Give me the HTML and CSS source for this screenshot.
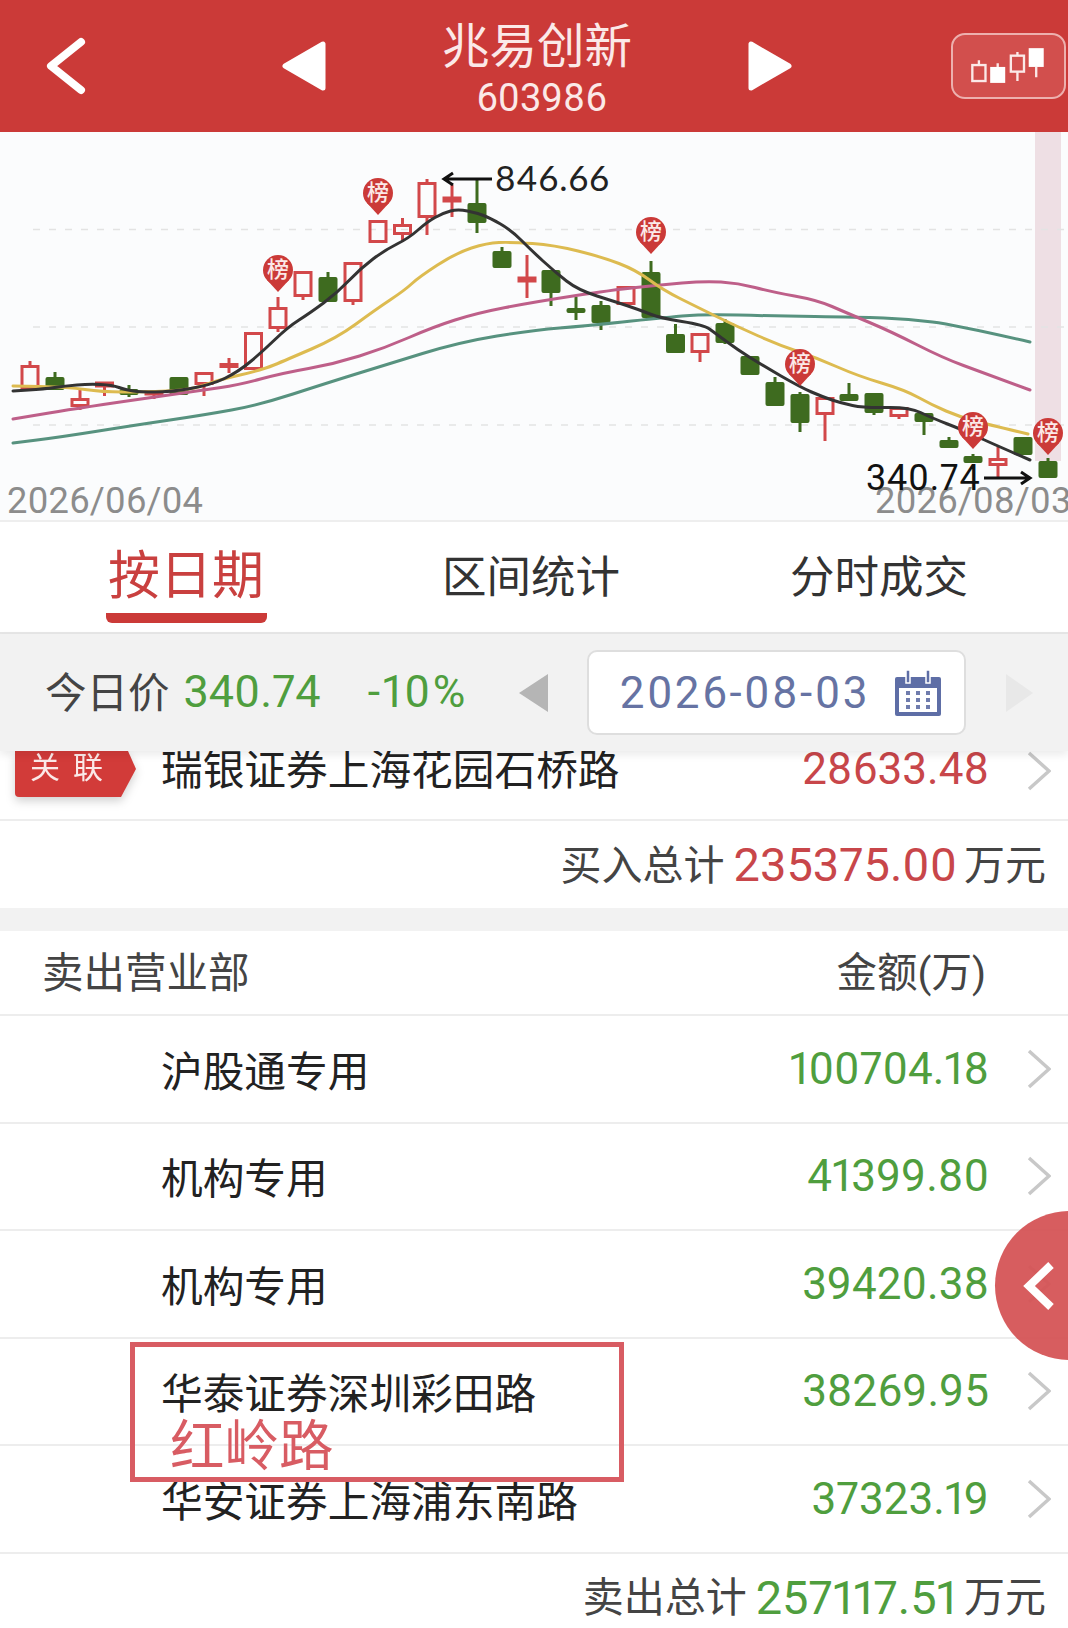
FILE: index.html

```html
<!DOCTYPE html>
<html lang="zh-CN">
<head>
  <meta charset="UTF-8">
  <title>兆易创新 603986</title>
  <meta name="viewport" content="width=device-width, initial-scale=1.0">
  <link rel="stylesheet" href="styles.css">
</head>
<body>

<header class="topbar">
  <svg class="top-icon back" viewBox="0 0 48 64"><path d="M38 8 L8 32 L38 56"/></svg>
  <svg class="top-icon prev" viewBox="0 0 44 50"><path d="M41 3 V47 L3 25 Z"/></svg>
  <div class="title">
    <div class="name">兆易创新</div>
    <div class="code">603986</div>
  </div>
  <svg class="top-icon next" viewBox="0 0 44 50"><path d="M3 3 V47 L41 25 Z"/></svg>
  <div class="kline-btn">
    <svg viewBox="0 0 115 66">
      <g class="k-hollow">
        <rect x="19" y="32" width="14" height="17"/>
        <rect x="60" y="22" width="14" height="17"/>
        <path d="M26 27 V32 M67 18 V22 M67 39 V49"/>
      </g>
      <g class="k-solid">
        <rect x="38" y="34" width="16" height="17"/>
        <rect x="79" y="14" width="16" height="20"/>
        <path d="M46 30 V34 M87 34 V45"/>
      </g>
    </svg>
  </div>
</header>

<section class="chart">
  <svg viewBox="0 132 1068 388">
    <rect class="band" x="1035" y="132" width="26" height="329"/>
    <path class="grid" d="M33 229.5 H1068 M33 327 H1068 M33 425 H1068"/>

    <g class="red-k">
      <path d="M30 361 V365 M80 388 V398 M80 407 V410 M104.5 387 V396 M154 395 V399 M204 385 V396 M229 358 V363 M229 368 V373 M278 297 V307 M278 329 V332 M303 297 V300 M353 302 V305 M402.5 218 V224 M402.5 235 V242 M427 179 V182 M427 218 V235 M452 185 V217 M527 255 V298 M700 353 V362 M825 415 V441 M899 417 V419 M998 447 V458 M998 466 V477"/>
      <rect x="22" y="366.5" width="16" height="22"/>
      <rect x="72" y="399.5" width="16" height="6"/>
      <rect x="96.5" y="383" width="16" height="3"/>
      <rect x="146" y="392" width="16" height="2"/>
      <rect x="196" y="373.5" width="16" height="10"/>
      <rect x="221" y="364.5" width="16" height="2"/>
      <rect x="245.5" y="333.5" width="16" height="35"/>
      <rect x="270" y="308.5" width="16" height="19"/>
      <rect x="295" y="272.5" width="16" height="23"/>
      <rect x="345" y="263.5" width="16" height="37"/>
      <rect x="370" y="221.5" width="16" height="20"/>
      <rect x="394.5" y="225.5" width="16" height="8"/>
      <rect x="419" y="183.5" width="16" height="33"/>
      <rect x="444" y="198" width="16" height="3"/>
      <rect x="519" y="278" width="16" height="3"/>
      <rect x="618" y="287.5" width="16" height="16"/>
      <rect x="692" y="334.5" width="16" height="17"/>
      <rect x="817" y="398.5" width="16" height="15"/>
      <rect x="891" y="408.5" width="16" height="7"/>
      <rect x="990" y="459.5" width="16" height="5"/>
    </g>

    <g class="green-k">
      <path d="M55 372 V377 M129 385 V397 M328 272 V277 M477 180 V233 M502 247 V251 M551 293 V306 M576 297 V320 M601 301 V330 M651 261 V272 M675.5 324 V334 M725 319 V344 M775 377 V382 M800 392 V432 M849 383 V394 M874 413 V415 M924 422 V435 M949 437 V440 M973 454 V456 M1048 458 V461"/>
      <rect x="45.500" y="377" width="19" height="13" rx="2"/>
      <rect x="119.500" y="389" width="19" height="6" rx="2"/>
      <rect x="169.500" y="377" width="19" height="18" rx="2"/>
      <rect x="318.500" y="277" width="19" height="25" rx="2"/>
      <rect x="467.500" y="203" width="19" height="20" rx="2"/>
      <rect x="492.500" y="251" width="19" height="17" rx="2"/>
      <rect x="541.500" y="270" width="19" height="23" rx="2"/>
      <rect x="566.500" y="308" width="19" height="5" rx="2"/>
      <rect x="591.500" y="305" width="19" height="18" rx="2"/>
      <rect x="641.500" y="272" width="19" height="46" rx="2"/>
      <rect x="666" y="334" width="19" height="19" rx="2"/>
      <rect x="715.500" y="323" width="19" height="20" rx="2"/>
      <rect x="740.500" y="356" width="19" height="19" rx="2"/>
      <rect x="765.500" y="382" width="19" height="24" rx="2"/>
      <rect x="790.500" y="394" width="19" height="29" rx="2"/>
      <rect x="839.500" y="394" width="19" height="7" rx="2"/>
      <rect x="864.500" y="393" width="19" height="20" rx="2"/>
      <rect x="914.500" y="413" width="19" height="9" rx="2"/>
      <rect x="939.500" y="440" width="19" height="8" rx="2"/>
      <rect x="963.500" y="456" width="19" height="7" rx="2"/>
      <rect x="1013.500" y="437" width="19" height="18" rx="2"/>
      <rect x="1038.500" y="461" width="19" height="17" rx="2"/>
    </g>

    <path class="ma teal" d="M13 443 L37 440 Q61 437 98.5 431 Q136 425 170 420 Q204 415 231.5 410 Q259 405 293 394 Q327 383 356 374 Q385 365 422.5 353.5 Q460 342 497 336 Q534 330 559.5 328 Q585 326 622.5 322 Q660 318 682 316 Q704 314 738 315 Q772 316 815 316.5 Q858 317 883.5 318 Q909 319 932.5 322 Q956 325 1030 342"/>
    <path class="ma pink" d="M13 419 L49 413 Q85 407 144.5 398.5 Q204 390 221 387.5 Q238 385 260.5 379 Q283 373 308.5 368.5 Q334 364 359.5 356 Q385 348 409 337.5 Q433 327 455 320 Q477 313 505.5 307.5 Q534 302 573 296 Q612 290 636 287.5 Q660 285 682 283 Q704 281 721 282 Q738 283 755 287.5 Q772 292 794.5 296 Q817 300 832 306.5 Q847 313 869.5 322.5 Q892 332 917.5 345 Q943 358 963.5 365.5 Q984 373 1030 390"/>
    <path class="ma yellow" d="M13 386 L40 386.5 Q68 387 85 389.5 Q102 392 122.5 392 Q143 392 167 391 Q191 390 204.5 385 Q218 380 240 375 Q262 370 274 365 Q286 360 311.5 349 Q337 338 356 324 Q375 310 390 300 Q405 290 412 283.5 Q419 277 437.5 265 Q456 253 471.5 248 Q487 243 499 242.5 Q511 242 532.5 243.5 Q554 245 578 251 Q602 257 619 263.5 Q636 270 649.5 280 Q663 290 680 298.5 Q697 307 717.5 317 Q738 327 758.5 336 Q779 345 798 351.5 Q817 358 837.5 367 Q858 376 881.5 383 Q905 390 918.5 397.5 Q932 405 946 411 Q960 417 975 421 Q990 425 1028 434"/>
    <path class="ma dark" d="M13 391 L28.5 390 Q44 389 54.5 387.5 Q65 386 77 385 Q89 384 100.5 384.5 Q112 385 119 387.5 Q126 390 133 391 Q140 392 155 392 Q170 392 190.5 388.5 Q211 385 224.5 378.5 Q238 372 250 362 Q262 352 275 339.5 Q288 327 299 320 Q310 313 323.5 303 Q337 293 349 280.5 Q361 268 373 259 Q385 250 397 244 Q409 238 418 230 Q427 222 435 217.5 Q443 213 450.5 211 Q458 209 467.5 211 Q477 213 483.5 215.5 Q490 218 500.5 224 Q511 230 521 240 Q531 250 543 261 Q555 272 566.5 281 Q578 290 597 296 Q616 302 628 306 Q640 310 650 314 Q660 318 682 321.5 Q704 325 709.5 329 Q715 333 726.5 341.5 Q738 350 750 357.5 Q762 365 781 376 Q800 387 811.5 392 Q823 397 832 400 Q841 403 852.5 405.5 Q864 408 886.5 407.5 Q909 407 920.5 412.5 Q932 418 947.5 424 Q963 430 973.5 435 Q984 440 1030 460"/>

    <g class="pin" transform="translate(378 193)"><circle r="15"/><path d="M-11 10 L0 22 L11 10 Z"/><text y="7">榜</text></g>
    <g class="pin" transform="translate(278 270)"><circle r="15"/><path d="M-11 10 L0 22 L11 10 Z"/><text y="7">榜</text></g>
    <g class="pin" transform="translate(651 232)"><circle r="15"/><path d="M-11 10 L0 22 L11 10 Z"/><text y="7">榜</text></g>
    <g class="pin" transform="translate(800 364)"><circle r="15"/><path d="M-11 10 L0 22 L11 10 Z"/><text y="7">榜</text></g>
    <g class="pin" transform="translate(973 427)"><circle r="15"/><path d="M-11 10 L0 22 L11 10 Z"/><text y="7">榜</text></g>
    <g class="pin" transform="translate(1048 433)"><circle r="15"/><path d="M-11 10 L0 22 L11 10 Z"/><text y="7">榜</text></g>

    <path class="arrow" d="M492 179 H445 M453 173 L444 179 L453 185"/>
    <text class="peak" x="495" y="191">846.66</text>
    <text class="date-label" x="7" y="513">2026/06/04</text>
    <text class="date-label" x="875" y="513">2026/08/03</text>
    <text class="low" x="866" y="490">340.74</text>
    <path class="arrow" d="M984 478 H1029 M1021 472 L1030 478 L1021 484"/>
  </svg>
</section>

<nav class="tabs">
  <div class="tab active"><span>按日期</span></div>
  <div class="tab">区间统计</div>
  <div class="tab">分时成交</div>
</nav>

<div class="price-bar">
  <span class="today">今日价</span>
  <span class="fall price">340.74</span>
  <span class="fall pct">-10%</span>
  <svg class="tri tri-prev" viewBox="0 0 31 40"><path d="M30 1 V39 L1 20 Z"/></svg>
  <div class="date-box">
    <span class="date-text">2026-08-03</span>
    <svg class="calendar" viewBox="0 0 48 46">
      <path class="cal-frame" d="M3 7 H45 a2 2 0 0 1 2 2 V44 a2 2 0 0 1 -2 2 H3 a2 2 0 0 1 -2 -2 V9 a2 2 0 0 1 2 -2 Z"/>
      <rect class="cal-page" x="5" y="18" width="38" height="24"/>
      <rect class="cal-peg" x="12" y="0" width="4" height="13"/>
      <rect class="cal-peg" x="32" y="0" width="4" height="13"/>
      <g class="cal-dots">
        <rect x="12" y="21" width="4" height="4"/><rect x="22" y="21" width="4" height="4"/><rect x="32" y="21" width="4" height="4"/>
        <rect x="12" y="28" width="4" height="4"/><rect x="22" y="28" width="4" height="4"/><rect x="32" y="28" width="4" height="4"/>
        <rect x="12" y="35" width="4" height="4"/><rect x="22" y="35" width="4" height="4"/><rect x="32" y="35" width="4" height="4"/>
      </g>
    </svg>
  </div>
  <svg class="tri tri-next" viewBox="0 0 29 40"><path d="M1 1 V39 L28 20 Z"/></svg>
</div>

<main class="list">
  <div class="row row-cut">
    <div class="tag-shadow"><div class="tag">关联</div></div>
    <div class="dept">瑞银证券上海花园石桥路</div>
    <div class="amount rise">28633.48</div>
    <svg class="chevron" viewBox="0 0 24 40"><path d="M2 2 L22 20 L2 38"/></svg>
  </div>
  <div class="total">买入总计<b class="rise">235375.00</b>万元</div>

  <div class="gap"></div>

  <div class="list-head">
    <span>卖出营业部</span>
    <span class="head-amount">金额(万)</span>
  </div>
  <div class="row">
    <div class="dept">沪股通专用</div>
    <div class="amount fall">100704.18</div>
    <svg class="chevron" viewBox="0 0 24 40"><path d="M2 2 L22 20 L2 38"/></svg>
  </div>
  <div class="row">
    <div class="dept">机构专用</div>
    <div class="amount fall">41399.80</div>
    <svg class="chevron" viewBox="0 0 24 40"><path d="M2 2 L22 20 L2 38"/></svg>
  </div>
  <div class="row">
    <div class="dept">机构专用</div>
    <div class="amount fall">39420.38</div>
    <svg class="chevron" viewBox="0 0 24 40"><path d="M2 2 L22 20 L2 38"/></svg>
  </div>
  <div class="row">
    <div class="dept">华泰证券深圳彩田路</div>
    <div class="amount fall">38269.95</div>
    <svg class="chevron" viewBox="0 0 24 40"><path d="M2 2 L22 20 L2 38"/></svg>
  </div>
  <div class="row">
    <div class="dept">华安证券上海浦东南路</div>
    <div class="amount fall">37323.19</div>
    <svg class="chevron" viewBox="0 0 24 40"><path d="M2 2 L22 20 L2 38"/></svg>
  </div>
  <div class="total total-sell">卖出总计<b class="fall">257117.51</b>万元</div>
</main>

<div class="float-btn">
  <svg viewBox="0 0 32 50"><path d="M28 4 L6 25 L28 46"/></svg>
</div>

<div class="note">
  <span>红岭路</span>
</div>

</body>
</html>
```

FILE: styles.css

```css
html, body {
  margin: 0;
  height: 1628px;
  overflow: hidden;
}
body {
  position: relative;
  background-color: #fff;
  color: #222;
  font-family: Roboto, "Noto Sans CJK SC", sans-serif;
  font-variant-numeric: proportional-nums;
}

/* top bar */
.topbar {
  height: 132px;
  background-color: #CB3A38;
  display: flex;
  align-items: center;
  box-sizing: border-box;
}
.top-icon {
  flex: none;
}
.back {
  width: 48px;
  height: 64px;
  margin-left: 43px;
  fill: none;
  stroke: #fff;
  stroke-width: 8;
  stroke-linecap: round;
  stroke-linejoin: round;
}
.prev, .next {
  width: 44px;
  height: 50px;
  fill: #fff;
  stroke: #fff;
  stroke-width: 5;
  stroke-linejoin: round;
}
.prev {
  margin-left: 191px;
}
.title {
  width: 422px;
  align-self: flex-start;
  padding-top: 19px;
  text-align: center;
  color: #FBE9E8;
}
.name {
  font-size: 47.500px;
  line-height: 56px;
}
.code {
  font-size: 38px;
  line-height: 44px;
  margin-top: 1px;
  padding-left: 9px;
}
.kline-btn {
  width: 115px;
  height: 66px;
  margin-left: 159px;
  box-sizing: border-box;
  border: 2px solid #EDB0AE;
  border-radius: 14px;
  background-color: #D24F4D;
  flex: none;
}
.kline-btn svg {
  display: block;
  width: 111px;
  height: 62px;
}
.k-hollow rect {
  fill: none;
  stroke: #FBE9E8;
  stroke-width: 2.5;
}
.k-hollow path, .k-solid path {
  stroke: #FBE9E8;
  stroke-width: 2.5;
}
.k-solid rect {
  fill: #fff;
}

/* chart */
.chart {
  height: 388px;
  background-color: #FBFCFD;
  overflow: hidden;
}
.chart svg {
  display: block;
  width: 1068px;
  height: 388px;
}
.band {
  fill: #EEDFE4;
}
.grid {
  stroke: #E3E3E3;
  stroke-width: 1.5;
  stroke-dasharray: 7 9;
  fill: none;
}
.red-k path {
  stroke: #D2484A;
  stroke-width: 3;
}
.red-k rect {
  fill: none;
  stroke: #D2484A;
  stroke-width: 3;
}
.green-k path {
  stroke: #3E6B1F;
  stroke-width: 3;
}
.green-k rect {
  fill: #3E6B1F;
}
.ma {
  fill: none;
  stroke-width: 3;
  stroke-linejoin: round;
  stroke-linecap: round;
}
.teal {
  stroke: #57927F;
}
.pink {
  stroke: #BE5F89;
}
.yellow {
  stroke: #DDBB50;
}
.dark {
  stroke: #333;
}
.pin circle, .pin path {
  fill: #CB3A38;
}
.pin text {
  fill: #FBE9E8;
  font-size: 22px;
  font-weight: 500;
  text-anchor: middle;
}
.arrow {
  fill: none;
  stroke: #111;
  stroke-width: 3;
}
.peak {
  font-family: Lato, sans-serif;
  font-size: 35px;
  letter-spacing: 1px;
  fill: #222;
}
.low {
  font-size: 36px;
  letter-spacing: 0.8px;
  fill: #111;
}
.date-label {
  font-size: 36.300px;
  fill: #8C8C8C;
}

/* tabs */
.tabs {
  display: grid;
  grid-template-columns: 372px 318px 1fr;
  height: 114px;
  box-sizing: border-box;
  border-top: 2px solid #EEE;
  border-bottom: 2px solid #E6E6E6;
  background-color: #fff;
  font-size: 44.500px;
  color: #333;
  line-height: 100px;
}
.tab {
  display: flex;
  justify-content: center;
  align-items: center;
  padding-top: 2px;
}
.tab.active {
  color: #C9403F;
  font-size: 52px;
  padding-top: 0;
  align-items: flex-start;
}
.tab.active span {
  box-sizing: border-box;
  height: 101px;
  padding-top: 24px;
  line-height: 62px;
  border-bottom: 10px solid #CB3A38;
  border-radius: 6px;
  width: 161px;
  text-align: center;
}

/* price bar */
.price-bar {
  position: relative;
  z-index: 2;
  height: 117px;
  box-sizing: border-box;
  display: flex;
  align-items: center;
  padding-left: 45px;
  background-color: #F2F2F2;
  box-shadow: 0 4px 8px rgba(0,0,0,0.08);
}
.today {
  font-size: 41.500px;
  color: #444;
  padding-bottom: 6px;
}
.fall {
  color: #4F9E3E;
}
.rise {
  color: #C8464A;
}
.price {
  font-size: 45px;
  margin-left: 14px;
  padding-bottom: 2px;
}
.pct {
  font-size: 44.500px;
  letter-spacing: 2.500px;
  margin-left: 47px;
  padding-bottom: 2px;
}
.tri {
  flex: none;
}
.tri-prev {
  width: 33px;
  height: 40px;
  margin-left: 49px;
  fill: #B5B5B5;
}
.tri-next {
  width: 29px;
  height: 40px;
  margin-left: 39px;
  fill: #E8E8E8;
}
.date-box {
  width: 379px;
  height: 85px;
  margin-left: 37px;
  box-sizing: border-box;
  display: flex;
  align-items: center;
  padding-left: 31px;
  background-color: #fff;
  border: 2px solid #DEDEDE;
  border-radius: 10px;
  flex: none;
}
.date-text {
  font-size: 44px;
  letter-spacing: 2.400px;
  color: #6673A3;
}
.calendar {
  width: 48px;
  height: 46px;
  margin-left: 24px;
  flex: none;
}
.cal-frame {
  fill: #5E6EA6;
}
.cal-page {
  fill: #fff;
}
.cal-peg {
  fill: #5E6EA6;
  stroke: #fff;
  stroke-width: 1.5;
}
.cal-dots {
  fill: #6F7CAD;
}

/* list */
.row {
  position: relative;
  display: flex;
  align-items: center;
  height: 107.5px;
  box-sizing: border-box;
  padding-left: 161px;
  border-bottom: 2px solid #EDEDED;
}
.row-cut {
  height: 70px;
  padding-bottom: 36px;
}
.dept {
  flex: 1;
  font-size: 41.700px;
  color: #222;
}
.amount {
  font-size: 44px;
  margin-right: 38px;
}
.chevron {
  width: 24px;
  height: 40px;
  margin-right: 17px;
  fill: none;
  stroke: #C8C8C8;
  stroke-width: 3.5;
  flex: none;
}
.row-cut .chevron {
  position: relative;
  top: 4px;
}
.row-cut .amount {
  position: relative;
  top: 2px;
}
.tag-shadow {
  position: absolute;
  left: 15px;
  top: 0;
  filter: drop-shadow(0 4px 5px rgba(0,0,0,0.18));
}
.tag {
  width: 121px;
  height: 46px;
  box-sizing: border-box;
  padding-left: 15px;
  font-size: 30px;
  line-height: 34px;
  letter-spacing: 13px;
  color: #FBE9E8;
  background-color: #D23B39;
  border-radius: 0 0 0 4px;
  clip-path: polygon(0 0, 113px 0, 100% 18px, 106px 100%, 0 100%);
}
.total {
  height: 87px;
  box-sizing: border-box;
  display: flex;
  justify-content: flex-end;
  align-items: center;
  padding: 0 22px 6px 0;
  font-size: 41px;
  color: #444;
}
.total b {
  font-weight: 400;
  font-size: 47px;
  margin: 0 7px 0 9px;
  padding-top: 6px;
}
.gap {
  height: 23px;
  background-color: #F2F2F2;
}
.list-head {
  height: 85px;
  box-sizing: border-box;
  display: flex;
  justify-content: space-between;
  align-items: center;
  padding: 0 82px 6px 42px;
  border-bottom: 2px solid #EDEDED;
  font-size: 41.500px;
  color: #444;
}
.head-amount {
  font-size: 40.500px;
}

/* overlays */
.float-btn {
  position: absolute;
  left: 995px;
  top: 1211px;
  width: 149px;
  height: 149px;
  border-radius: 50%;
  background-color: rgba(213, 84, 86, 0.95);
  display: flex;
  align-items: center;
  padding-left: 28px;
  box-sizing: border-box;
}
.float-btn svg {
  width: 32px;
  height: 50px;
  fill: none;
  stroke: #fff;
  stroke-width: 8;
}
.note {
  position: absolute;
  left: 130px;
  top: 1342px;
  width: 494px;
  height: 140px;
  box-sizing: border-box;
  border: 5px solid #D85C63;
  padding: 68px 0 0 35px;
  font-size: 54.500px;
  line-height: 62px;
  color: #D85C63;
}
```
